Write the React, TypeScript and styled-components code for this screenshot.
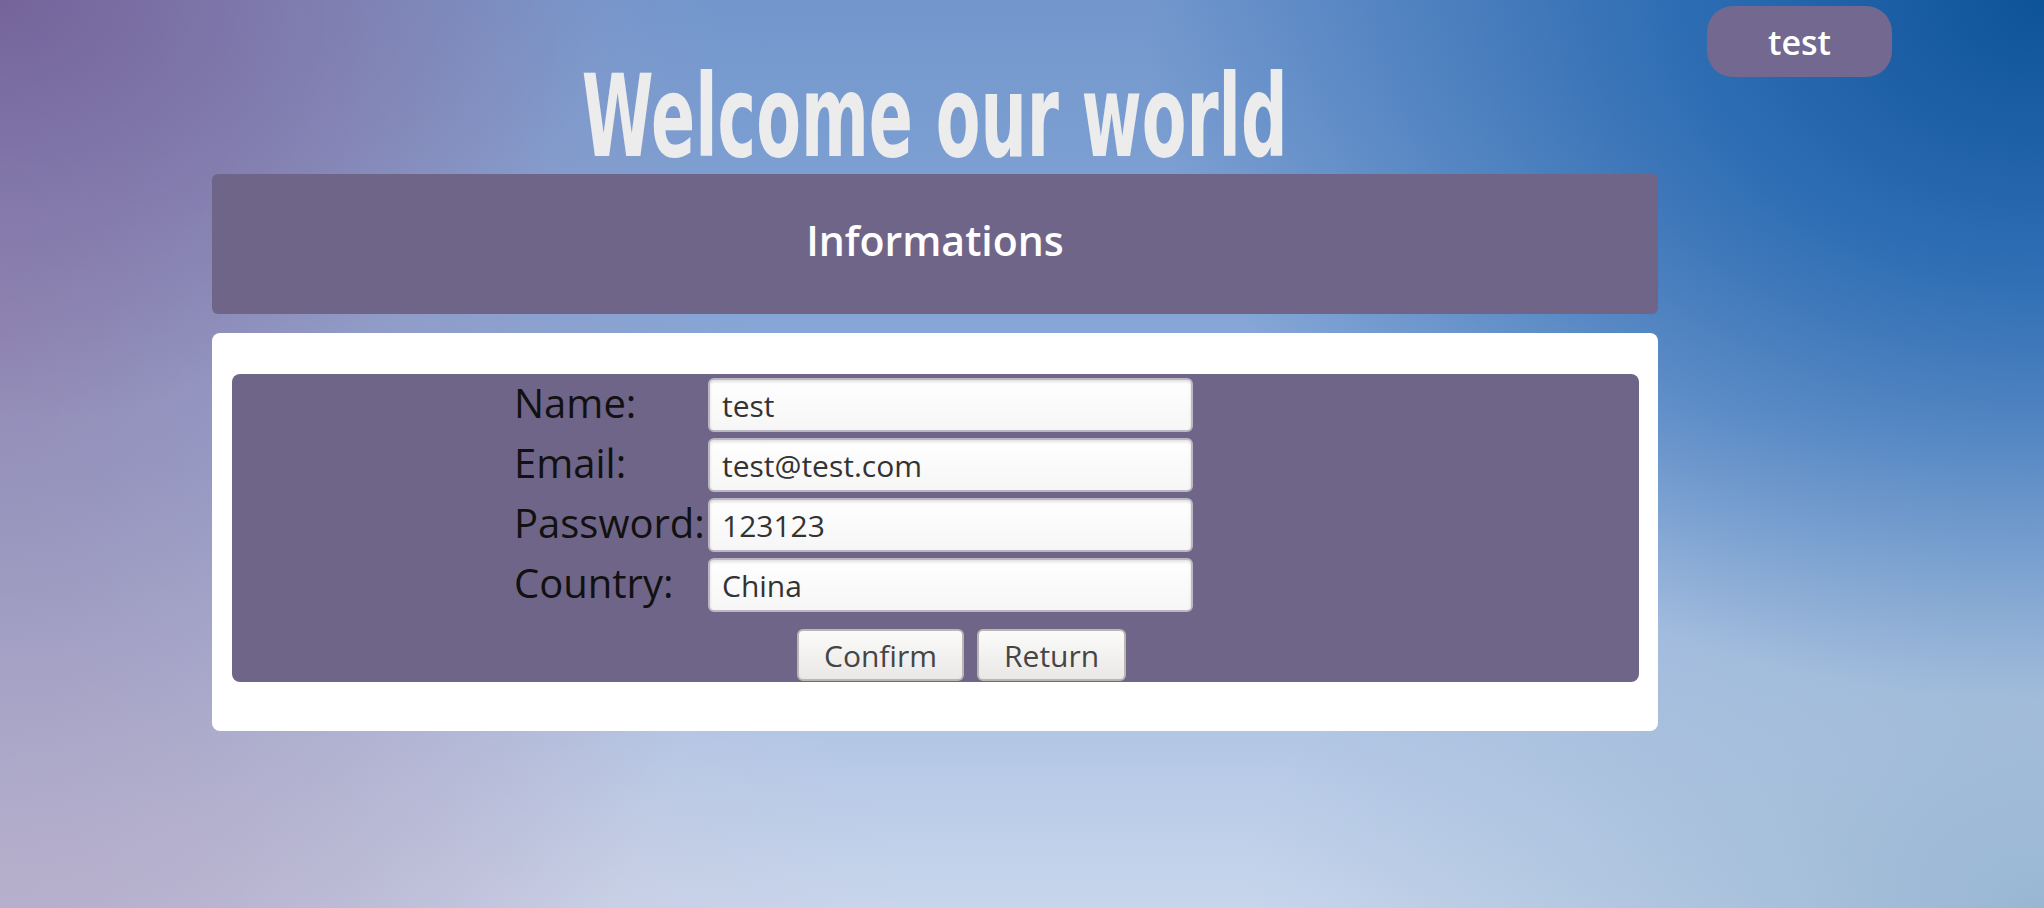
import styled, { createGlobalStyle } from "styled-components";

const fields = [
  { label: "Name:", value: "test" },
  { label: "Email:", value: "test@test.com" },
  { label: "Password:", value: "123123" },
  { label: "Country:", value: "China" },
];

export default function App() {
  return (
    <>
      <GlobalStyle />
      <Page>
        <MainColumn>
          <Title>
            <TitleText>Welcome our world</TitleText>
          </Title>
          <SectionHeader>Informations</SectionHeader>
          <Card>
            <FormPanel>
              <FieldList>
                {fields.map((f) => (
                  <FieldRow key={f.label}>
                    <FieldLabel>{f.label}</FieldLabel>
                    <FieldInput defaultValue={f.value} />
                  </FieldRow>
                ))}
              </FieldList>
              <ButtonRow>
                <ActionButton>Confirm</ActionButton>
                <ActionButton>Return</ActionButton>
              </ButtonRow>
            </FormPanel>
          </Card>
        </MainColumn>
        <UserButton>test</UserButton>
      </Page>
    </>
  );
}

const GlobalStyle = createGlobalStyle`
  html, body {
    margin: 0;
    padding: 0;
  }
  body {
    font-family: "Open Sans", "Noto Sans", sans-serif;
  }
`;

const Page = styled.div`
  box-sizing: border-box;
  width: 100%;
  min-height: 908px;
  padding-left: 212px;
  display: flex;
  align-items: flex-start;
  gap: 49px;
  background:
    radial-gradient(ellipse 900px 700px at 100% 0%, #0d5398 0%, rgba(28, 98, 172, 0.8) 40%, rgba(50, 120, 190, 0) 100%),
    radial-gradient(ellipse 600px 420px at 0% 0%, #74649a 0%, rgba(120, 104, 158, 0.6) 45%, rgba(150, 140, 185, 0) 100%),
    radial-gradient(ellipse 750px 1000px at 0% 35%, rgba(150, 136, 178, 0.9) 0%, rgba(155, 146, 185, 0.5) 50%, rgba(160, 150, 190, 0) 100%),
    radial-gradient(ellipse 900px 450px at 0% 100%, #cac4d9 0%, rgba(200, 196, 217, 0.6) 45%, rgba(200, 196, 217, 0) 100%),
    radial-gradient(ellipse 800px 500px at 100% 100%, #98b6d3 0%, rgba(152, 182, 211, 0) 100%),
    linear-gradient(180deg, #7397cd 0%, #8aaad9 45%, #c8d6ec 100%);
`;

const MainColumn = styled.div`
  width: 1446px;
  display: flex;
  flex-direction: column;
`;

const Title = styled.h1`
  margin: 60px 0 0;
  height: 114px;
  text-align: center;
  font-family: "DejaVu Sans Condensed", "Liberation Sans", sans-serif;
  font-size: 114px;
  line-height: 114px;
  font-weight: 700;
  color: #ececec;
  white-space: nowrap;
`;

const TitleText = styled.span`
  display: inline-block;
  transform: scaleX(0.635);
`;

const SectionHeader = styled.div`
  box-sizing: border-box;
  height: 140px;
  padding-bottom: 8px;
  border-radius: 6px;
  background: #6f6589;
  color: #ffffff;
  font-size: 41px;
  font-weight: 600;
  display: flex;
  align-items: center;
  justify-content: center;
`;

const Card = styled.div`
  margin-top: 19px;
  background: #ffffff;
  border-radius: 8px;
  padding: 41px 19px 49px 20px;
`;

const FormPanel = styled.div`
  height: 308px;
  box-sizing: border-box;
  border-radius: 8px;
  background: #6f6589;
  padding: 4px 0 3px;
`;

const FieldList = styled.div`
  margin-left: 282px;
  display: flex;
  flex-direction: column;
  gap: 6px;
`;

const FieldRow = styled.div`
  display: flex;
  align-items: flex-start;
  height: 54px;
`;

const FieldLabel = styled.label`
  width: 194px;
  margin-top: -2px;
  font-size: 40px;
  line-height: 54px;
  color: #111111;
  white-space: nowrap;
`;

const FieldInput = styled.input`
  box-sizing: border-box;
  width: 485px;
  height: 54px;
  padding: 0 12px;
  border: 2px solid #bcb7c2;
  border-radius: 6px;
  background: linear-gradient(180deg, #ffffff 0%, #f6f6f6 100%);
  box-shadow: inset 0 2px 3px rgba(0, 0, 0, 0.12);
  font-family: "Open Sans", "Noto Sans", sans-serif;
  font-size: 30px;
  color: #333333;
  outline: none;
`;

const ButtonRow = styled.div`
  margin-top: 17px;
  padding-left: 565px;
  display: flex;
  gap: 13px;
`;

const ActionButton = styled.button`
  box-sizing: border-box;
  height: 52px;
  padding: 0 25px;
  border: 2px solid #bab6b0;
  border-radius: 6px;
  background: linear-gradient(180deg, #fbfbfa 0%, #e9e8e6 100%);
  font-family: "Open Sans", "Noto Sans", sans-serif;
  font-size: 30px;
  color: #454545;
  cursor: pointer;
`;

const UserButton = styled.button`
  margin-top: 6px;
  width: 185px;
  height: 71px;
  border: none;
  border-radius: 26px;
  background: #726890;
  color: #ffffff;
  font-family: "Open Sans", "Noto Sans", sans-serif;
  font-size: 34px;
  font-weight: 600;
  cursor: pointer;
`;
